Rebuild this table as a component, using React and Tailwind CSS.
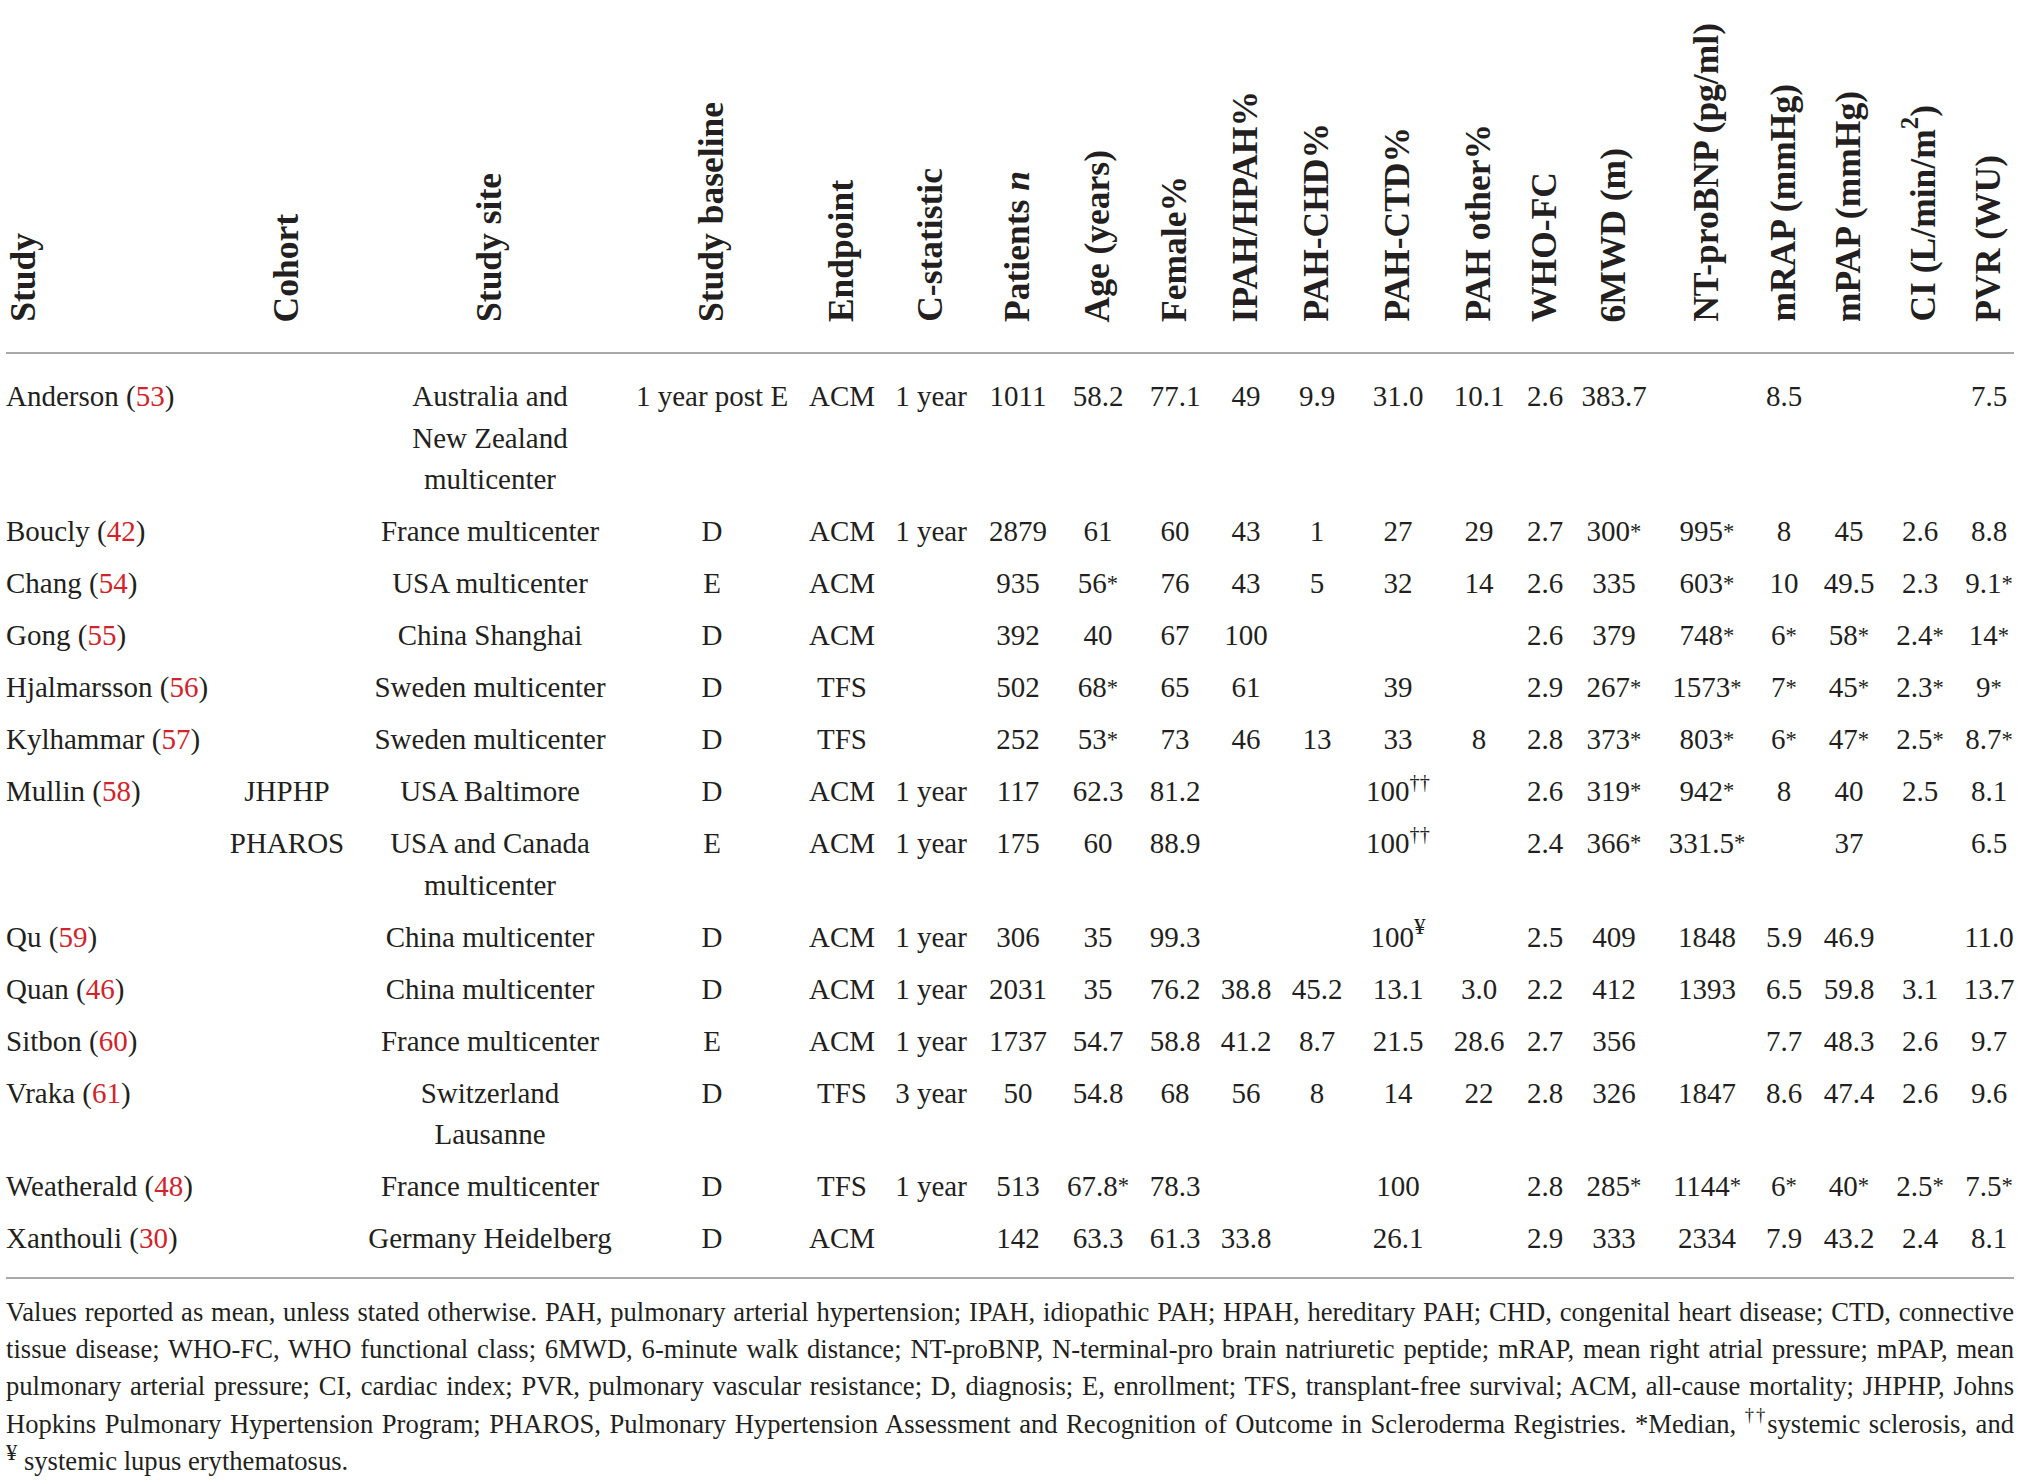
import React from "react";

const COLS = [
  "w-[200px] justify-start",
  "ml-[21px] w-[120px] justify-center",
  "ml-[43px] w-[200px] justify-center",
  "ml-[47px] w-[150px] justify-center",
  "ml-[20px] w-[70px] justify-center",
  "ml-[9px] w-[90px] justify-center",
  "ml-[7px] w-[70px] justify-center",
  "ml-[10px] w-[70px] justify-center",
  "ml-[9px] w-[66px] justify-center",
  "ml-[7px] w-[62px] justify-center",
  "ml-[9px] w-[62px] justify-center",
  "ml-[15px] w-[70px] justify-center",
  "ml-[13px] w-[66px] justify-center",
  "ml-[8px] w-[50px] justify-center",
  "ml-[11px] w-[66px] justify-center",
  "ml-[15px] w-[90px] justify-center",
  "ml-[4px] w-[56px] justify-center",
  "ml-[7px] w-[60px] justify-center",
  "ml-[11px] w-[60px] justify-center",
  "ml-[14px] w-[50px] justify-center",
];

const HEADERS = [
  "Study",
  "Cohort",
  "Study site",
  "Study baseline",
  "Endpoint",
  "C-statistic",
  <>Patients <i>n</i></>,
  "Age (years)",
  "Female%",
  "IPAH/HPAH%",
  "PAH-CHD%",
  "PAH-CTD%",
  "PAH other%",
  "WHO-FC",
  "6MWD (m)",
  "NT-proBNP (pg/ml)",
  "mRAP (mmHg)",
  "mPAP (mmHg)",
  <>CI (L/min/m<span className="align-super text-[0.7em] leading-none">2</span>)</>,
  "PVR (WU)",
];

const Ref = ({ n }) => <span className="text-[#d2232a]">{n}</span>;
const S = ({ name, n }) => (
  <>
    {name} (<Ref n={n} />)
  </>
);
const Sup = ({ children }) => <sup className="text-[0.7em] -top-[0.6em]">{children}</sup>;

const ROWS = [
  [<S name="Anderson" n="53" />, "", <>Australia and<br />New Zealand<br />multicenter</>, "1 year post E", "ACM", "1 year", "1011", "58.2", "77.1", "49", "9.9", "31.0", "10.1", "2.6", "383.7", "", "8.5", "", "", "7.5"],
  [<S name="Boucly" n="42" />, "", "France multicenter", "D", "ACM", "1 year", "2879", "61", "60", "43", "1", "27", "29", "2.7", "300*", "995*", "8", "45", "2.6", "8.8"],
  [<S name="Chang" n="54" />, "", "USA multicenter", "E", "ACM", "", "935", "56*", "76", "43", "5", "32", "14", "2.6", "335", "603*", "10", "49.5", "2.3", "9.1*"],
  [<S name="Gong" n="55" />, "", "China Shanghai", "D", "ACM", "", "392", "40", "67", "100", "", "", "", "2.6", "379", "748*", "6*", "58*", "2.4*", "14*"],
  [<S name="Hjalmarsson" n="56" />, "", "Sweden multicenter", "D", "TFS", "", "502", "68*", "65", "61", "", "39", "", "2.9", "267*", "1573*", "7*", "45*", "2.3*", "9*"],
  [<S name="Kylhammar" n="57" />, "", "Sweden multicenter", "D", "TFS", "", "252", "53*", "73", "46", "13", "33", "8", "2.8", "373*", "803*", "6*", "47*", "2.5*", "8.7*"],
  [<S name="Mullin" n="58" />, "JHPHP", "USA Baltimore", "D", "ACM", "1 year", "117", "62.3", "81.2", "", "", <>100<Sup>††</Sup></>, "", "2.6", "319*", "942*", "8", "40", "2.5", "8.1"],
  ["", "PHAROS", <>USA and Canada<br />multicenter</>, "E", "ACM", "1 year", "175", "60", "88.9", "", "", <>100<Sup>††</Sup></>, "", "2.4", "366*", "331.5*", "", "37", "", "6.5"],
  [<S name="Qu" n="59" />, "", "China multicenter", "D", "ACM", "1 year", "306", "35", "99.3", "", "", <>100<sup className="text-[0.8em] -top-[0.55em]">¥</sup></>, "", "2.5", "409", "1848", "5.9", "46.9", "", "11.0"],
  [<S name="Quan" n="46" />, "", "China multicenter", "D", "ACM", "1 year", "2031", "35", "76.2", "38.8", "45.2", "13.1", "3.0", "2.2", "412", "1393", "6.5", "59.8", "3.1", "13.7"],
  [<S name="Sitbon" n="60" />, "", "France multicenter", "E", "ACM", "1 year", "1737", "54.7", "58.8", "41.2", "8.7", "21.5", "28.6", "2.7", "356", "", "7.7", "48.3", "2.6", "9.7"],
  [<S name="Vraka" n="61" />, "", <>Switzerland<br />Lausanne</>, "D", "TFS", "3 year", "50", "54.8", "68", "56", "8", "14", "22", "2.8", "326", "1847", "8.6", "47.4", "2.6", "9.6"],
  [<S name="Weatherald" n="48" />, "", "France multicenter", "D", "TFS", "1 year", "513", "67.8*", "78.3", "", "", "100", "", "2.8", "285*", "1144*", "6*", "40*", "2.5*", "7.5*"],
  [<S name="Xanthouli" n="30" />, "", "Germany Heidelberg", "D", "ACM", "", "142", "63.3", "61.3", "33.8", "", "26.1", "", "2.9", "333", "2334", "7.9", "43.2", "2.4", "8.1"],
];

const FOOT = [
  "Values reported as mean, unless stated otherwise. PAH, pulmonary arterial hypertension; IPAH, idiopathic PAH; HPAH, hereditary PAH; CHD, congenital heart disease; CTD, connective",
  "tissue disease; WHO-FC, WHO functional class; 6MWD, 6-minute walk distance; NT-proBNP, N-terminal-pro brain natriuretic peptide; mRAP, mean right atrial pressure; mPAP, mean",
  "pulmonary arterial pressure; CI, cardiac index; PVR, pulmonary vascular resistance; D, diagnosis; E, enrollment; TFS, transplant-free survival; ACM, all-cause mortality; JHPHP, Johns",
  <>Hopkins Pulmonary Hypertension Program; PHAROS, Pulmonary Hypertension Assessment and Recognition of Outcome in Scleroderma Registries. *Median, <Sup>††</Sup>systemic sclerosis, and</>,
];

function Cell({ v }) {
  if (typeof v === "string" && v.endsWith("*")) {
    return (
      <span>
        {v.slice(0, -1)}
        <span className="text-[0.78em] leading-none relative -top-[0.12em]">*</span>
      </span>
    );
  }
  return <span>{v}</span>;
}

export default function App() {
  return (
    <div className="w-[2020px] h-[1482px] bg-white text-[#231f20] font-['Liberation_Serif','Times_New_Roman',serif] px-[6px] overflow-hidden">
      {/* Header */}
      <div className="flex items-end h-[354px] pb-[30px] border-b-2 border-[#a7a9ac]">
        {HEADERS.map((h, i) => (
          <div key={i} className={`${COLS[i]} flex shrink-0`}>
            <span className="[writing-mode:vertical-rl] rotate-180 whitespace-nowrap leading-none text-[35.5px] font-bold">
              {h}
            </span>
          </div>
        ))}
      </div>

      {/* Body */}
      <div className="pt-[17px] pb-[12px] border-b-2 border-[#a7a9ac]">
        {ROWS.map((r, ri) => (
          <div key={ri} className="flex items-start py-[5.2px] text-[29px] leading-[41.6px]">
            {r.map((v, ci) => (
              <div key={ci} className={`${COLS[ci]} flex shrink-0 whitespace-nowrap text-center h-auto`}>
                <Cell v={v} />
              </div>
            ))}
          </div>
        ))}
      </div>

      {/* Footnote */}
      <div className="pt-[15px] text-[26.6px] leading-[37.2px]">
        {FOOT.map((l, i) => (
          <div key={i} className="whitespace-nowrap text-justify [text-align-last:justify]">
            {l}
          </div>
        ))}
        <div className="whitespace-nowrap">
          <sup className="text-[0.85em] -top-[0.45em]">¥</sup> systemic lupus erythematosus.
        </div>
      </div>
    </div>
  );
}
